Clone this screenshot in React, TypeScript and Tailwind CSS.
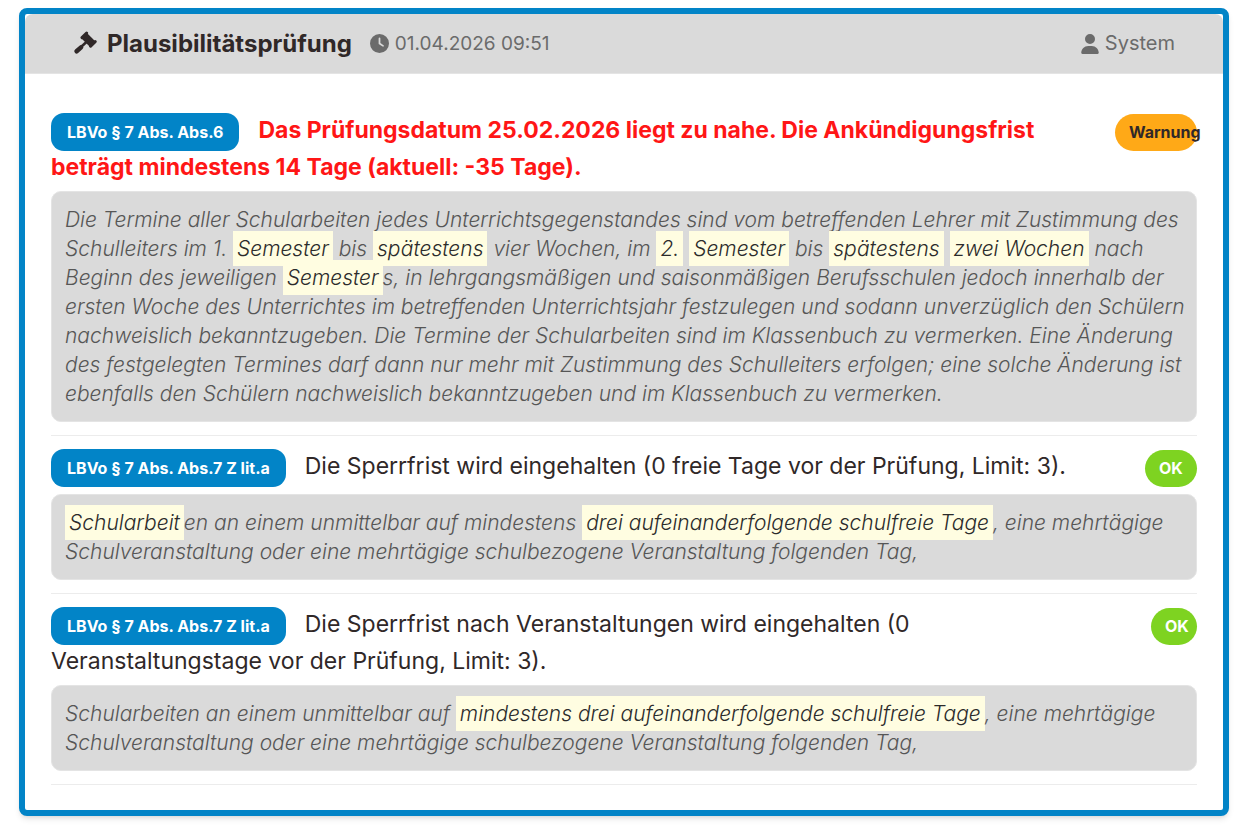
import { ReactNode } from 'react';
import { FaClock, FaUser } from 'react-icons/fa6';
import { clsx } from 'clsx';

type Status = 'warning' | 'ok';

interface Check {
  law: string;
  message: ReactNode;
  status: Status;
  statusClass: string;
  quote: ReactNode;
}

function Hit({ children }: { children: ReactNode }) {
  return <mark className="bg-[#fffde1] px-1 py-[5px] text-[#2b2b2b]">{children}</mark>;
}

function GavelIcon({ className }: { className?: string }) {
  return (
    <svg viewBox="0 0 24 28" className={className} fill="currentColor" stroke="currentColor" aria-hidden="true">
      <path d="M13.5 4 21 11.5 17 15.5 9.5 8Z" strokeWidth="2" strokeLinejoin="round" />
      <path d="M13.6 3 9 7.6M22.2 11.6l-4.6 4.6" strokeWidth="3" strokeLinecap="round" />
      <path d="M14 11.5 8 17" strokeWidth="2.6" />
      <path d="M8 17.4 3.6 21.3" strokeWidth="4.6" strokeLinecap="round" />
    </svg>
  );
}

const CHECKS: Check[] = [
  {
    law: 'LBVo § 7 Abs. Abs.6',
    message: (
      <>
        Das Prüfungsdatum 25.02.2026 liegt zu nahe. Die Ankündigungsfrist
        <br />
        beträgt mindestens 14 Tage (aktuell: -35 Tage).
      </>
    ),
    status: 'warning',
    statusClass: 'w-[82px] bg-[#ffa917] text-[#302828]',
    quote: (
      <>
        Die Termine aller Schularbeiten jedes Unterrichtsgegenstandes sind vom betreffenden Lehrer mit Zustimmung des
        <br />
        Schulleiters im 1. <Hit>Semester</Hit> bis <Hit>spätestens</Hit> vier Wochen, im <Hit>2.</Hit>{' '}
        <Hit>Semester</Hit> bis <Hit>spätestens</Hit> <Hit>zwei Wochen</Hit> nach
        <br />
        Beginn des jeweiligen <Hit>Semester</Hit>s, in lehrgangsmäßigen und saisonmäßigen Berufsschulen jedoch
        innerhalb der
        <br />
        ersten Woche des Unterrichtes im betreffenden Unterrichtsjahr festzulegen und sodann unverzüglich den Schülern
        <br />
        nachweislich bekanntzugeben. Die Termine der Schularbeiten sind im Klassenbuch zu vermerken. Eine Änderung
        <br />
        des festgelegten Termines darf dann nur mehr mit Zustimmung des Schulleiters erfolgen; eine solche Änderung ist
        <br />
        ebenfalls den Schülern nachweislich bekanntzugeben und im Klassenbuch zu vermerken.
      </>
    ),
  },
  {
    law: 'LBVo § 7 Abs. Abs.7 Z lit.a',
    message: 'Die Sperrfrist wird eingehalten (0 freie Tage vor der Prüfung, Limit: 3).',
    status: 'ok',
    statusClass: 'w-[52px] bg-[#7ed321] text-white',
    quote: (
      <>
        <Hit>Schularbeit</Hit>en an einem unmittelbar auf mindestens <Hit>drei aufeinanderfolgende schulfreie Tage</Hit>
        , eine mehrtägige
        <br />
        Schulveranstaltung oder eine mehrtägige schulbezogene Veranstaltung folgenden Tag,
      </>
    ),
  },
  {
    law: 'LBVo § 7 Abs. Abs.7 Z lit.a',
    message: (
      <>
        Die Sperrfrist nach Veranstaltungen wird eingehalten (0
        <br />
        Veranstaltungstage vor der Prüfung, Limit: 3).
      </>
    ),
    status: 'ok',
    statusClass: 'w-[46px] bg-[#7ed321] text-white',
    quote: (
      <>
        Schularbeiten an einem unmittelbar auf <Hit>mindestens drei aufeinanderfolgende schulfreie Tage</Hit>, eine
        mehrtägige
        <br />
        Schulveranstaltung oder eine mehrtägige schulbezogene Veranstaltung folgenden Tag,
      </>
    ),
  },
];

function CheckItem({ check }: { check: Check }) {
  const warning = check.status === 'warning';

  return (
    <li className="border-b border-[#ececec] pt-3 pb-[13px]">
      <div className="mb-[5px] flex min-h-[41px] items-start gap-4">
        <h3
          className={clsx(
            'flex-1 text-[23px] leading-[37px]',
            warning ? 'font-bold text-[#ff1616]' : 'text-[#302828]',
          )}
        >
          <span className="mr-[19px] rounded-[13px] bg-[#0284c7] px-4 py-[9px] text-base font-bold whitespace-nowrap text-white">
            {check.law}
          </span>
          {check.message}
        </h3>
        <span
          className={clsx(
            'mt-[2px] h-[37px] shrink-0 rounded-full pl-[14px] text-base leading-[37px] font-bold whitespace-nowrap',
            check.statusClass,
          )}
        >
          {warning ? 'Warnung' : 'OK'}
        </span>
      </div>
      <blockquote className="rounded-[10px] border border-[#e4e4e4] bg-[#dadada] py-[13px] pr-1 pl-[13px] text-[21px] leading-[29px] font-light text-[#565656] italic">
        {check.quote}
      </blockquote>
    </li>
  );
}

export default function App() {
  return (
    <div className="bg-white pt-2 pr-[23px] pb-4 pl-[19px] font-['Inter',sans-serif]">
      <section className="rounded-lg border-[6px] border-[#0284c7] bg-white shadow-md">
        <header className="flex items-center justify-between rounded-t-lg border-b border-[#e4e4e4] bg-[#dadada] px-12 py-[11px] text-xl leading-[37px] text-[#6b6b6b]">
          <div className="flex items-center">
            <GavelIcon className="mr-[10px] h-7 w-6 text-[#302828]" />
            <h2 className="mr-[18px] text-2xl leading-[37px] font-bold text-[#302828]">Plausibilitätsprüfung</h2>
            <FaClock className="mr-[6px] size-[19px]" />
            <time dateTime="2026-04-01T09:51" className="text-[19px]">
              01.04.2026 09:51
            </time>
          </div>
          <div className="flex items-center gap-[5px]">
            <FaUser className="size-5" />
            System
          </div>
        </header>
        <ul className="px-[26px] pt-[26px] pb-[25px]">
          {CHECKS.map((check, i) => (
            <CheckItem key={i} check={check} />
          ))}
        </ul>
      </section>
    </div>
  );
}
